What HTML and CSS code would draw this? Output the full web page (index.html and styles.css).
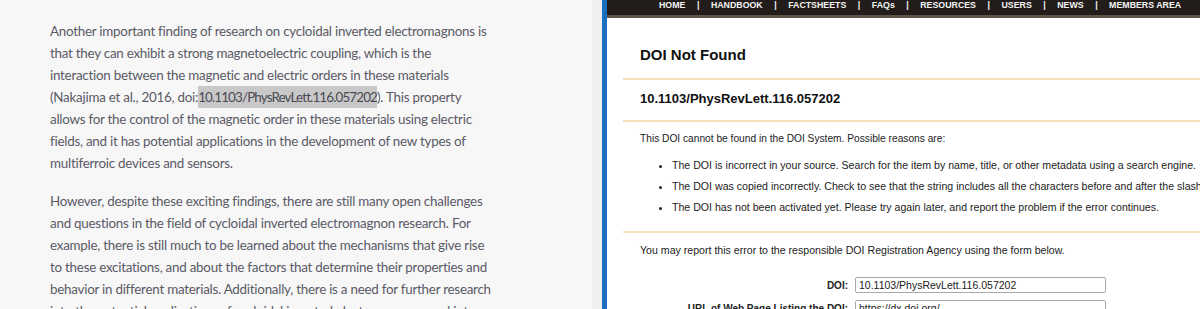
FILE: index.html
```html
<!DOCTYPE html>
<html lang="en">
<head>
<meta charset="utf-8">
<title>Split view</title>
<link rel="stylesheet" href="styles.css">
</head>
<body>
<div class="split">
  <section class="left">
    <article class="article">
      <p>Another important finding of research on cycloidal inverted electromagnons is<br>that they can exhibit a strong magnetoelectric coupling, which is the<br>interaction between the magnetic and electric orders in these materials<br>(Nakajima et al., 2016, doi:<span class="hl">10.1103/PhysRevLett.116.057202</span>). This property<br>allows for the control of the magnetic order in these materials using electric<br>fields, and it has potential applications in the development of new types of<br>multiferroic devices and sensors.</p>
      <p>However, despite these exciting findings, there are still many open challenges<br>and questions in the field of cycloidal inverted electromagnon research. For<br>example, there is still much to be learned about the mechanisms that give rise<br>to these excitations, and about the factors that determine their properties and<br>behavior in different materials. Additionally, there is a need for further research<br>into the potential applications of cycloidal inverted electromagnons and into</p>
    </article>
  </section>
  <div class="gutter"></div>
  <div class="bar"></div>
  <section class="right">
    <nav class="nav">
      <span>HOME</span><span class="sep">|</span>
      <span>HANDBOOK</span><span class="sep">|</span>
      <span>FACTSHEETS</span><span class="sep">|</span>
      <span>FAQs</span><span class="sep">|</span>
      <span>RESOURCES</span><span class="sep">|</span>
      <span>USERS</span><span class="sep">|</span>
      <span>NEWS</span><span class="sep">|</span>
      <span>MEMBERS AREA</span>
    </nav>
    <div class="content">
      <div class="block title-block">
        <h1 class="title">DOI Not Found</h1>
      </div>
      <div class="block doi-block">
        <h2 class="doi">10.1103/PhysRevLett.116.057202</h2>
      </div>
      <div class="block reasons">
        <p class="text">This DOI cannot be found in the DOI System. Possible reasons are:</p>
        <ul class="list">
          <li>The DOI is incorrect in your source. Search for the item by name, title, or other metadata using a search engine.</li>
          <li>The DOI was copied incorrectly. Check to see that the string includes all the characters before and after the slash and no sub-string is missing.</li>
          <li>The DOI has not been activated yet. Please try again later, and report the problem if the error continues.</li>
        </ul>
      </div>
      <div class="block report">
        <p class="text">You may report this error to the responsible DOI Registration Agency using the form below.</p>
        <form class="form">
          <label class="label" for="doi">DOI:</label>
          <input class="input" id="doi" type="text" value="10.1103/PhysRevLett.116.057202">
          <label class="label" for="url">URL of Web Page Listing the DOI:</label>
          <input class="input" id="url" type="text" value="https://dx.doi.org/">
        </form>
      </div>
    </div>
  </section>
</div>
</body>
</html>
```

FILE: styles.css
```css
html, body {
  margin: 0;
  padding: 0;
}

body {
  width: 1200px;
  height: 309px;
  overflow: hidden;
  background: #f7f7f7;
}

.split {
  display: flex;
  height: 309px;
  overflow: hidden;
}

.left {
  width: 592px;
  flex: none;
  background: #f7f7f7;
  overflow: hidden;
}

.article {
  padding: 20px 0 0 50px;
  font-family: Lato, "Open Sans", sans-serif;
  font-size: 13.4px;
  letter-spacing: -0.25px;
  line-height: 22px;
  color: #5a5a66;
  white-space: nowrap;
}

.article p {
  margin: 0 0 16px;
}

.hl {
  display: inline-block;
  background: #c8c8c8;
  color: #4a4a55;
  letter-spacing: -0.85px;
}

.gutter {
  width: 10px;
  flex: none;
  background: #efefef;
}

.bar {
  width: 5px;
  flex: none;
  background: #1b6fc0;
}

.right {
  flex: 1;
  min-width: 0;
  background: #ffffff;
  overflow: hidden;
  font-family: "Liberation Sans", Arial, sans-serif;
  color: #222222;
}

.nav {
  display: flex;
  gap: 11.5px;
  height: 15px;
  padding-left: 52px;
  background: #221d1a;
  border-bottom: 3px solid #5e5447;
  color: #f4f4f4;
  font-size: 8.8px;
  font-weight: 700;
  line-height: 11px;
  white-space: nowrap;
}

.content {
  padding-left: 16px;
  white-space: nowrap;
}

.block {
  padding-left: 17px;
  border-bottom: 2px solid #f5e1bb;
}

.title-block {
  padding-top: 28px;
  padding-bottom: 14px;
}

.title {
  margin: 0;
  font-size: 15px;
  line-height: 18px;
  font-weight: 700;
  color: #111111;
}

.doi-block {
  padding-top: 11px;
  padding-bottom: 13px;
}

.doi {
  margin: 0;
  font-size: 13px;
  line-height: 16px;
  font-weight: 700;
  color: #111111;
}

.reasons {
  padding-top: 10px;
  padding-bottom: 17px;
}

.text {
  margin: 0;
  font-size: 10.6px;
  line-height: 14px;
}

.reasons .text {
  font-size: 10.2px;
}

.list {
  margin: 12px 0 0;
  padding-left: 32px;
  font-size: 10.6px;
  line-height: 14px;
}

.list li + li {
  margin-top: 7px;
}

.report {
  padding-top: 10px;
  border-bottom: none;
}

.form {
  display: grid;
  grid-template-columns: 208px 251px;
  column-gap: 7px;
  row-gap: 7px;
  margin-top: 20px;
  align-items: center;
}

.label {
  text-align: right;
  font-size: 10px;
  font-weight: 700;
  color: #222222;
}

.input {
  box-sizing: border-box;
  height: 16px;
  margin: 0;
  padding: 0 3px;
  border: 1px solid #a8a8a8;
  border-radius: 2px;
  font-family: "Liberation Sans", Arial, sans-serif;
  font-size: 10.5px;
  color: #222222;
  background: #ffffff;
}
```
